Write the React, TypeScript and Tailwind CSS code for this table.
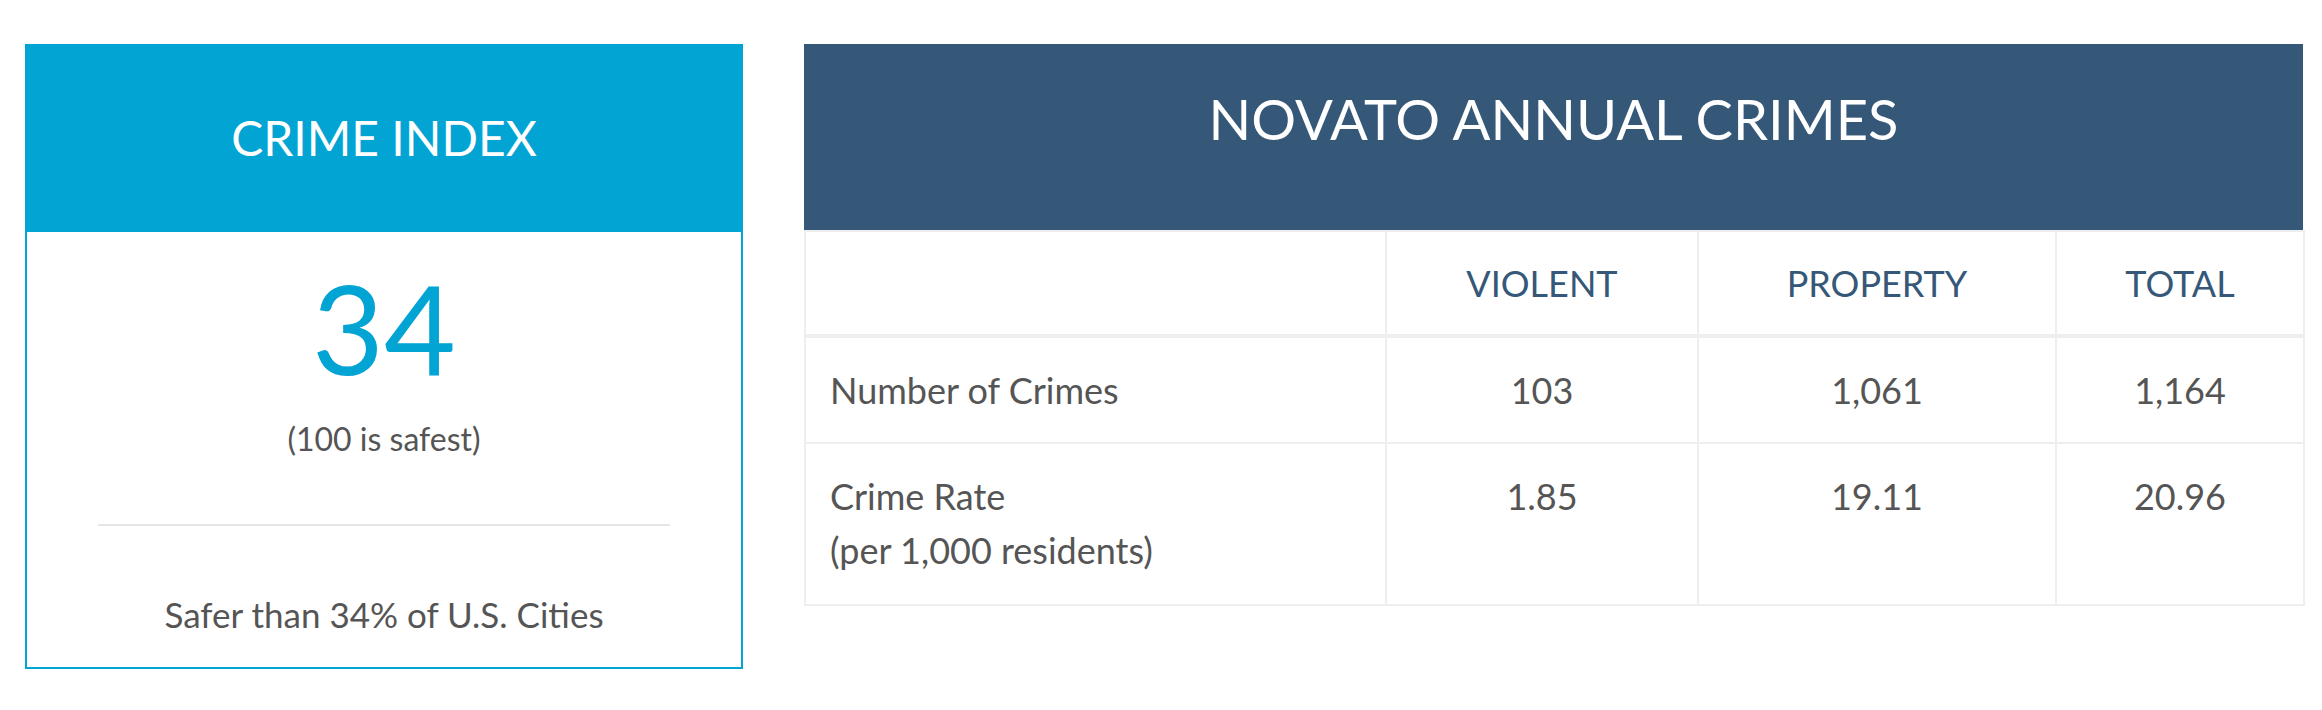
import React from 'react';

const App: React.FC = () => {
  const rows = [
    { label: ['Number of Crimes'], violent: '103', property: '1,061', total: '1,164' },
    { label: ['Crime Rate', '(per 1,000 residents)'], violent: '1.85', property: '19.11', total: '20.96' },
  ];

  return (
    <div className="min-h-screen bg-white font-['Lato',sans-serif] text-[#555555]">
      <div className="flex items-start pl-[25px] pt-[44px] gap-[61px]">
        {/* Crime Index card */}
        <div className="w-[718px] shrink-0">
          <div className="h-[188px] bg-[#02a4d3] flex items-center justify-center">
            <h2 className="text-[48px] leading-[1.2] text-white">CRIME INDEX</h2>
          </div>
          <div className="border-2 border-t-0 border-[#02a4d3] pt-[33px] pb-[26px] text-center">
            <div className="text-[124px] leading-[124px] text-[#02a4d3]">34</div>
            <p className="mt-[23px] text-[32px] leading-[54px]">(100 is safest)</p>
            <div className="mt-[58px] mx-auto w-4/5 h-[2px] bg-[#e5e5e5]" />
            <p className="mt-[61px] text-[35px] leading-[54px]">Safer than 34% of U.S. Cities</p>
          </div>
        </div>

        {/* Annual crimes table */}
        <div className="w-[1499px] shrink-0">
          <div className="h-[186px] bg-[#365878] pt-[41px] text-center">
            <h2 className="text-[56px] leading-[1.2] text-white">NOVATO ANNUAL CRIMES</h2>
          </div>
          <table className="w-full table-fixed border-collapse">
            <colgroup>
              <col className="w-[581px]" />
              <col className="w-[312px]" />
              <col className="w-[358px]" />
              <col className="w-[248px]" />
            </colgroup>
            <thead>
              <tr className="text-[36px] leading-[54px] text-[#365878]">
                <th className="border-2 border-b-4 border-[#eeeeee] py-[24px] font-normal"></th>
                <th className="border-2 border-b-4 border-[#eeeeee] py-[24px] font-normal text-center">VIOLENT</th>
                <th className="border-2 border-b-4 border-[#eeeeee] py-[24px] font-normal text-center">PROPERTY</th>
                <th className="border-2 border-b-4 border-[#eeeeee] py-[24px] font-normal text-center">TOTAL</th>
              </tr>
            </thead>
            <tbody>
              {rows.map((row, i) => (
                <tr key={i} className="text-[36px] leading-[54px] align-top">
                  <td className={`border-2 border-[#eeeeee] px-[24px] pt-[25px] ${i === 1 ? 'pb-[27px]' : 'pb-[25px]'}`}>
                    {row.label.map((l) => (
                      <div key={l}>{l}</div>
                    ))}
                  </td>
                  <td className="border-2 border-[#eeeeee] pt-[25px] text-center">{row.violent}</td>
                  <td className="border-2 border-[#eeeeee] pt-[25px] text-center">{row.property}</td>
                  <td className="border-2 border-[#eeeeee] pt-[25px] text-center">{row.total}</td>
                </tr>
              ))}
            </tbody>
          </table>
        </div>
      </div>
    </div>
  );
};

export default App;
